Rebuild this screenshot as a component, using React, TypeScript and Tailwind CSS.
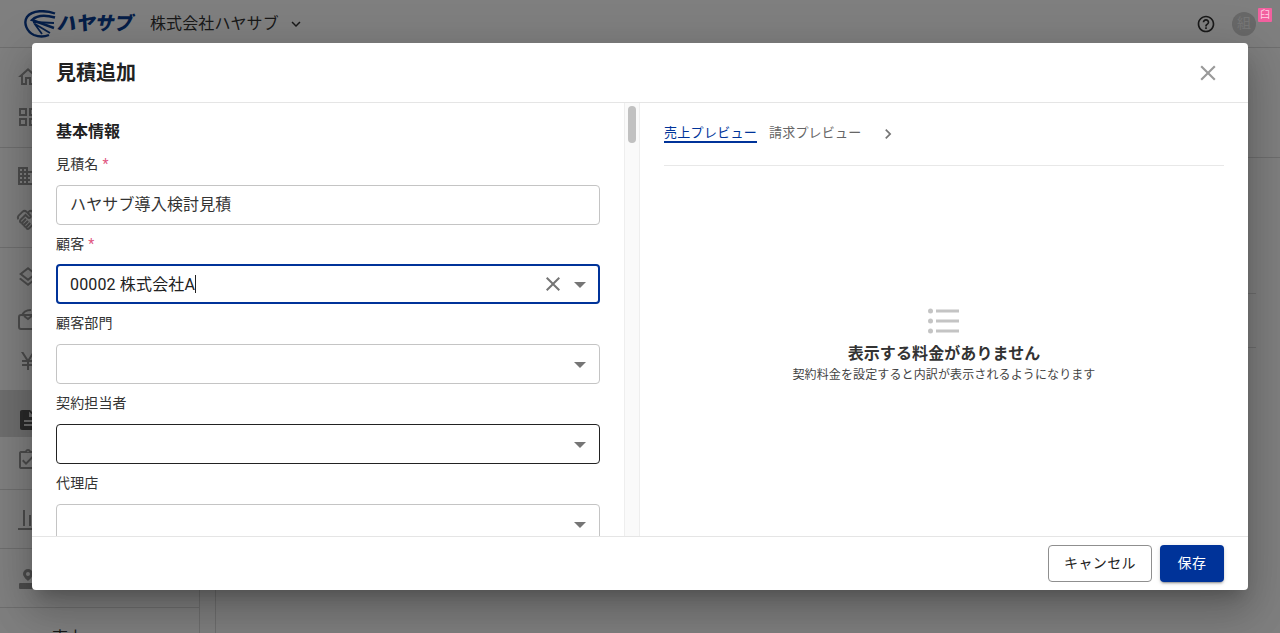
import {
  MdChevronRight,
  MdClose,
  MdDescription,
  MdExpandMore,
  MdOutlineAssignmentTurnedIn,
  MdOutlineBusiness,
  MdOutlineCurrencyYen,
  MdOutlineGridView,
  MdOutlineHandshake,
  MdOutlineHelpOutline,
  MdOutlineHome,
  MdOutlineLayers,
} from 'react-icons/md';

const font = "font-['Roboto','Noto_Sans_CJK_JP',sans-serif]";

function Label({ text, required }: { text: string; required?: boolean }) {
  return (
    <div className="flex h-[20px] items-center text-[14px] leading-[20px] tracking-[0.15px] text-[#333]">
      {text}
      {required && <span className="ml-[4px] text-[#e0557f]">*</span>}
    </div>
  );
}

function Caret() {
  return <span className="h-0 w-0 translate-y-[1px] border-x-[6px] border-t-[6px] border-x-transparent border-t-[#757575]" />;
}

function Select({ value, border, clear }: { value?: string; border: string; clear?: boolean }) {
  return (
    <div className={`flex h-[40px] shrink-0 items-center rounded-[4px] text-[16px] tracking-[0.15px] text-[#222] ${border} ${clear ? 'pl-[12px] pr-[12px]' : 'pl-[13px] pr-[13px]'}`}>
      <span className="flex-1 leading-[24px]">
        {value}
        {clear && <span className="inline-block h-[18px] w-px translate-y-[3px] bg-[#222]" />}
      </span>
      {clear && <MdClose className="mr-[9px] text-[#757575]" size={24} />}
      <Caret />
    </div>
  );
}

function NavRow({ icon, active, h }: { icon: React.ReactNode; active?: boolean; h: string }) {
  return (
    <div className={`flex items-center pl-[16px] text-[24px] ${h} ${active ? 'bg-[#dcdcdc] text-[#555]' : 'text-[#999]'}`}>
      {icon}
    </div>
  );
}

// the chart, contract and agent icons of the side menu have no close match in the packages
function ChartIcon() {
  return (
    <svg width="24" height="24" viewBox="0 0 24 24" fill="currentColor">
      <rect x="7" y="3" width="2" height="16" />
      <rect x="13" y="8" width="2" height="11" />
      <rect x="19" y="12" width="2" height="7" />
      <rect x="2" y="21" width="20" height="2" />
    </svg>
  );
}

function BagIcon() {
  return (
    <svg width="24" height="24" viewBox="0 0 24 24" fill="none" stroke="currentColor" strokeWidth="2">
      <rect x="3" y="8" width="18" height="14" rx="2" />
      <path d="M6 9c1-4 4-6 9-6M8 9l4 3 5-4" />
    </svg>
  );
}

function PinIcon() {
  return (
    <svg width="24" height="24" viewBox="0 0 24 24" fill="currentColor">
      <path d="M12 2a5 5 0 0 0-5 5c0 3 5 7 5 7s5-4 5-7a5 5 0 0 0-5-5zm0 3a2 2 0 1 1 0 4 2 2 0 0 1 0-4z" />
      <rect x="3" y="16" width="18" height="6" rx="1" />
    </svg>
  );
}

function Sidebar() {
  return (
    <aside className="w-[200px] shrink-0 border-r border-[#ddd]">
      <div className="border-b border-[#ddd] pb-[10px] pt-[9px]">
        <NavRow h="h-[40px]" icon={<MdOutlineHome />} />
        <NavRow h="h-[40px]" icon={<MdOutlineGridView />} />
      </div>
      <div className="border-b border-[#ddd] pb-[5px] pt-[6px]">
        <NavRow h="h-[44px]" icon={<MdOutlineBusiness />} />
        <NavRow h="h-[44px]" icon={<MdOutlineHandshake />} />
      </div>
      <div className="border-b border-[#ddd] pb-[8px] pt-[8px]">
        <NavRow h="h-[42px]" icon={<MdOutlineLayers />} />
        <NavRow h="h-[42px]" icon={<BagIcon />} />
        <NavRow h="h-[42px]" icon={<MdOutlineCurrencyYen />} />
      </div>
      <div className="border-b border-[#ddd] pb-[6px]">
        <NavRow h="h-[46px] pt-[12px]" active icon={<MdDescription />} />
        <NavRow h="h-[46px]" icon={<MdOutlineAssignmentTurnedIn />} />
      </div>
      <div className="border-b border-[#ddd] pb-[6px] pt-[6px]">
        <NavRow h="h-[46px]" icon={<ChartIcon />} />
      </div>
      <div className="border-b border-[#ddd] pb-[5px] pt-[7px]">
        <NavRow h="h-[46px]" icon={<PinIcon />} />
      </div>
      <div className="flex h-[40px] items-center gap-[4px] pl-[30px] pt-[20px] text-[16px] text-[#333]">
        <MdChevronRight size={18} />
        <span>売上</span>
      </div>
    </aside>
  );
}

function Page() {
  return (
    <div className="flex h-[633px] flex-col overflow-hidden bg-white">
      <header className="flex h-[48px] shrink-0 items-center border-b border-[#ddd] pl-[24px] pr-[24px]">
        <svg width="34" height="28" viewBox="0 0 34 28" fill="none" stroke="#0a3d91" strokeWidth="2.4">
          <path d="M31 3.5C22 0 8 0 3 7c-4 6 0 15 7 18 6 2.4 11 1.6 15 0" />
          <path d="M31 7.5C22 5 13 5 8 10l22 8" />
          <path d="M9 12l21 1M11 14l15 9M10 13l8 11" strokeWidth="1.8" />
        </svg>
        <span className="-skew-x-12 text-[19px] font-black leading-none text-[#0a3d91]">ハヤサブ</span>
        <span className="ml-[16px] text-[16px] tracking-[0.1px] text-[#333]">株式会社ハヤサブ</span>
        <MdExpandMore className="ml-[8px] text-[#333]" size={18} />
        <span className="flex-1" />
        <MdOutlineHelpOutline className="text-[#333]" size={20} />
        <span className="ml-[16px] flex h-[24px] w-[24px] items-center justify-center rounded-full bg-[#d0d0d0] text-[14px] text-[#eee]">組</span>
      </header>
      <div className="flex flex-1">
        <Sidebar />
        <main className="ml-[15px] flex-1 border-l border-[#ddd]">
          <div className="h-[110px] border-b border-[#ddd]" />
          <div className="mr-[24px] h-[136px] border-b border-[#ddd]" />
          <div className="mr-[24px] h-[54px] border-b border-[#ddd]" />
        </main>
      </div>
    </div>
  );
}

function Dialog() {
  return (
    <div className="absolute left-[32px] top-[43px] flex h-[547px] w-[1216px] flex-col rounded-[4px] bg-white shadow-[0px_11px_15px_-7px_rgba(0,0,0,0.2),0px_24px_38px_3px_rgba(0,0,0,0.14),0px_9px_46px_8px_rgba(0,0,0,0.12)]">
      <div className="flex h-[60px] shrink-0 items-center justify-between border-b border-[#e5e5e5] px-[24px]">
        <h2 className="text-[20px] font-bold text-[#222]">見積追加</h2>
        <MdClose className="mr-[3px] text-[#9a9a9a]" size={26} />
      </div>
      <div className="flex min-h-0 flex-1">
        <div className="flex w-[592px] flex-col overflow-hidden pl-[24px] pr-[24px]">
          <div className="flex h-[41px] shrink-0 items-end text-[16px] font-bold leading-[24px] text-[#222]">基本情報</div>
          <div className="mt-[10px]">
            <Label text="見積名" required />
          </div>
          <div className="mt-[11px] flex h-[40px] shrink-0 items-center rounded-[4px] border border-[#c4c4c4] pl-[13px] text-[16px] tracking-[0.15px] text-[#333]">
            ハヤサブ導入検討見積
          </div>
          <div className="mt-[9px]">
            <Label text="顧客" required />
          </div>
          <div className="mt-[10px]">
            <Select value="00002 株式会社A" border="border-2 border-[#003399]" clear />
          </div>
          <div className="mt-[9px]">
            <Label text="顧客部門" />
          </div>
          <div className="mt-[11px]">
            <Select border="border border-[#c4c4c4]" />
          </div>
          <div className="mt-[9px]">
            <Label text="契約担当者" />
          </div>
          <div className="mt-[11px]">
            <Select border="border border-[#222]" />
          </div>
          <div className="mt-[9px]">
            <Label text="代理店" />
          </div>
          <div className="mt-[11px]">
            <Select border="border border-[#c4c4c4]" />
          </div>
        </div>
        <div className="w-[16px] shrink-0 border-x border-[#eee] bg-[#fafafa] pl-[3px] pr-[3px] pt-[3px]">
          <div className="h-[37px] rounded-full bg-[#c1c1c1]" />
        </div>
        <div className="flex flex-1 flex-col px-[24px]">
          <div className="flex h-[63px] shrink-0 border-b border-[#e8e8e8] pt-[20px]">
            <div className="h-[20px] w-[93px] whitespace-nowrap border-b-2 border-[#003399] text-center text-[13px] leading-[20px] tracking-[0.3px] text-[#003399]">
              売上プレビュー
            </div>
            <div className="ml-[12px] whitespace-nowrap text-[13px] leading-[20px] tracking-[0.2px] text-[#666]">請求プレビュー</div>
            <MdChevronRight className="ml-[17px] mt-[1px] text-[#757575]" size={20} />
          </div>
          <div className="flex flex-col items-center pt-[142px]">
            <svg width="32" height="26" viewBox="0 0 32 26" fill="#c4c4c4">
              <circle cx="2.5" cy="3" r="2.5" />
              <circle cx="2.5" cy="13" r="2.5" />
              <circle cx="2.5" cy="23" r="2.5" />
              <rect x="8" y="1.5" width="23" height="3" />
              <rect x="8" y="11.5" width="23" height="3" />
              <rect x="8" y="21.5" width="23" height="3" />
            </svg>
            <div className="mt-[8px] text-[16px] font-bold leading-[24px] tracking-[0.1px] text-[#333]">表示する料金がありません</div>
            <div className="text-[12px] leading-[18px] tracking-[0.12px] text-[#444]">契約料金を設定すると内訳が表示されるようになります</div>
          </div>
        </div>
      </div>
      <div className="flex h-[54px] shrink-0 items-center justify-end gap-[8px] border-t border-[#e5e5e5] px-[24px]">
        <button className="h-[37px] w-[104px] rounded-[4px] border border-[#8f8f8f] text-[14px] tracking-[0.4px] text-[#222]">キャンセル</button>
        <button className="h-[37px] w-[64px] rounded-[4px] bg-[#003399] text-[14px] tracking-[0.4px] text-white shadow-[0px_3px_1px_-2px_rgba(0,0,0,0.2),0px_2px_2px_0px_rgba(0,0,0,0.14),0px_1px_5px_0px_rgba(0,0,0,0.12)]">保存</button>
      </div>
    </div>
  );
}

export default function App() {
  return (
    <div className={`relative h-[633px] w-[1280px] overflow-hidden ${font}`}>
      <Page />
      <div className="absolute inset-0 bg-black/50" />
      <Dialog />
      <span className="absolute left-[1258px] top-[8px] flex h-[14px] w-[14px] items-center justify-center rounded-[1px] bg-[#f2609f] text-[10px] leading-none text-[#ffd0e4]">臼</span>
    </div>
  );
}
